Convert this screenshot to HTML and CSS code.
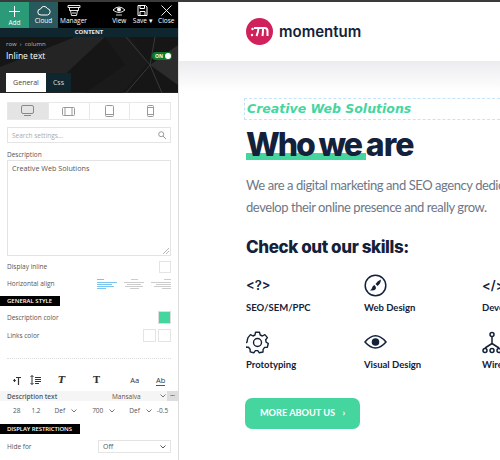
FILE: index.html
```html
<!DOCTYPE html>
<html lang="en">
<head>
    <meta charset="UTF-8">
    <title>Momentum editor</title>
    <link rel="stylesheet" href="styles.css">
</head>
<body>
    <div class="topline"></div>
    <div class="page">
        <aside class="panel">
            <div class="toolbar">
                <div class="tool tool-add">
                    <svg width="13" height="13" viewBox="0 0 13 13"><path d="M6.500 1v11M1 6.500h11" stroke="#fff" fill="none"/></svg>
                    <span>Add</span>
                </div>
                <div class="tool tool-cloud">
                    <svg width="14" height="11" viewBox="0 0 14 11"><path d="M4 10a3 3 0 0 1-.4-6A3.600 3.600 0 0 1 10.300 3.500a3.300 3.300 0 0 1 .2 6.500z" stroke="#fff" fill="none"/></svg>
                    <span>Cloud</span>
                </div>
                <div class="tool tool-manager">
                    <svg width="14" height="11" viewBox="0 0 14 11"><path d="M1 .5h12v2H1zM2.500 2.500v3h9v-3M3.500 5.500l1 5h5l1-5M5 8h4" stroke="#fff" fill="none" stroke-width=".9"/></svg>
                    <span>Manager</span>
                </div>
                <div class="tool-gap"></div>
                <div class="tool">
                    <svg width="14" height="11" viewBox="0 0 14 11"><path d="M1 5Q7-1 13 5Q7 10 1 5z" stroke="#fff" fill="none" stroke-width=".9"/><circle cx="7" cy="4.500" r="2" fill="#fff"/><path d="M4 10h6" stroke="#fff" stroke-width=".8"/></svg>
                    <span>View</span>
                </div>
                <div class="tool">
                    <svg width="11" height="11" viewBox="0 0 11 11"><path d="M1 .5h7.500l1.500 1.500v8.500H1zM3 .5v3h4.500v-3M3 10.500v-4h5v4" stroke="#fff" fill="none"/></svg>
                    <span>Save ▾</span>
                </div>
                <div class="tool">
                    <svg width="11" height="11" viewBox="0 0 11 11"><path d="M.5.5l10 10M10.500.5l-10 10" stroke="#fff" fill="none" stroke-width=".9"/></svg>
                    <span>Close</span>
                </div>
            </div>
            <div class="content-bar">CONTENT</div>
            <div class="panel-head">
                <svg class="head-art" width="178" height="56" viewBox="0 0 178 56">
                    <path d="M0 30L75 0h30L45 56H0z" fill="#242424"/>
                    <path d="M105 0h25l18 26-26 30H85l40-28z" fill="#1a1a1a"/>
                    <path d="M126 0l24 28-24 28M150 28h28M155 0l-5 28 12 28" stroke="#3a3a3a" fill="none"/>
                    <path d="M150 28L178 8v40z" fill="#2c2c2c"/>
                </svg>
                <div class="crumbs">row &nbsp;›&nbsp; column</div>
                <div class="head-row">
                    <span class="head-title">Inline text</span>
                    <span class="toggle">ON<i></i></span>
                </div>
                <div class="tabs">
                    <span class="tab tab-on">General</span>
                    <span class="tab">Css</span>
                </div>
            </div>

            <div class="panel-body">
                <div class="devices">
                    <div class="device device-on">
                        <svg width="13" height="12" viewBox="0 0 13 12"><rect x=".5" y=".5" width="12" height="8" rx="1.500" fill="none" stroke="#888"/><path d="M3 10.500h7" stroke="#888"/></svg>
                    </div>
                    <div class="device">
                        <svg width="13" height="9" viewBox="0 0 13 9"><rect x=".5" y=".5" width="12" height="8" rx="1" fill="none" stroke="#999"/><path d="M3 .5v8M10 .5v8" stroke="#999"/></svg>
                    </div>
                    <div class="device">
                        <svg width="9" height="12" viewBox="0 0 9 12"><rect x=".5" y=".5" width="8" height="11" rx="1" fill="none" stroke="#999"/><path d="M.5 9.500h8" stroke="#999"/></svg>
                    </div>
                    <div class="device">
                        <svg width="7" height="12" viewBox="0 0 7 12"><rect x=".5" y=".5" width="6" height="11" rx="1" fill="none" stroke="#999"/><path d="M.5 2.500h6M.5 9.500h6" stroke="#999"/></svg>
                    </div>
                </div>

                <div class="search">
                    <span>Search settings...</span>
                    <svg width="8" height="8" viewBox="0 0 8 8"><circle cx="3.200" cy="3.200" r="2.500" fill="none" stroke="#999"/><path d="M5 5l3 3" stroke="#999"/></svg>
                </div>

                <div class="label label-desc">Description</div>
                <div class="textarea">
                    Creative Web Solutions
                    <svg class="grip" width="6" height="6" viewBox="0 0 6 6"><path d="M0 6l6-6M3 6l3-3" stroke="#999" stroke-width=".7"/></svg>
                </div>

                <div class="row row-inline">
                    <span class="label">Display inline</span>
                    <span class="check"></span>
                </div>
                <div class="row row-align">
                    <span class="label">Horizontal align</span>
                    <div class="aligns">
                        <svg width="20" height="10" viewBox="0 0 20 10"><path d="M0 .500h7M0 3.500h20M0 5.500h15M0 7.500h17M0 9.500h9" stroke="#7cc4f0"/></svg>
                        <svg width="20" height="10" viewBox="0 0 20 10"><path d="M7 .500h7M0 3.500h20M3 5.500h14M1 7.500h18M6 9.500h9" stroke="#ccc"/></svg>
                        <svg width="20" height="10" viewBox="0 0 20 10"><path d="M13 .500h7M0 3.500h20M5 5.500h15M3 7.500h17M11 9.500h9" stroke="#ccc"/></svg>
                    </div>
                </div>
            </div>

            <div class="section-bar bar-general">GENERAL STYLE</div>

            <div class="panel-body">
                <div class="row row-color">
                    <span class="label">Description color</span>
                    <span class="swatch swatch-green"></span>
                </div>
                <div class="row row-links">
                    <span class="label">Links color</span>
                    <div class="swatches"><span class="swatch"></span><span class="swatch"></span></div>
                </div>
                <div class="dots"></div>
            </div>

            <div class="type-icons">
                <svg class="ti ti-1" width="8" height="9" viewBox="0 0 8 9"><path d="M3 1.500h5M5.500 1.500V9M.2 4.500h2.600M1.500 3v3" stroke="#333" stroke-width="1.200" fill="none"/></svg>
                <svg class="ti ti-2" width="11" height="10" viewBox="0 0 11 10"><path d="M2 .5v9M.5 2L2 .5 3.500 2M.5 8L2 9.500 3.500 8M5 2.500h6M5 4.500h6M5 6.500h6M5 8.500h4" stroke="#333" fill="none"/></svg>
                <span class="ti ti-3">T</span>
                <span class="ti ti-4">T</span>
                <span class="ti ti-5">Aa</span>
                <span class="ti ti-6">Ab</span>
            </div>
            <div class="type-head">
                <b>Description text</b>
                <span class="type-font">Mansalva</span>
                <svg class="chev" width="6" height="4" viewBox="0 0 6 4"><path d="M.5.500L3 3 5.500.500" stroke="#777" fill="none"/></svg>
                <span class="more">•••</span>
            </div>
            <div class="type-vals">
                <span class="v-size">28</span>
                <span class="v-line">1.2</span>
                <span class="v-def1">Def<svg class="chev" width="6" height="4" viewBox="0 0 6 4"><path d="M.5.500L3 3 5.500.500" stroke="#777" fill="none"/></svg></span>
                <span class="v-700">700<svg class="chev" width="6" height="4" viewBox="0 0 6 4"><path d="M.5.500L3 3 5.500.500" stroke="#777" fill="none"/></svg></span>
                <span class="v-def2">Def<svg class="chev" width="6" height="4" viewBox="0 0 6 4"><path d="M.5.500L3 3 5.500.500" stroke="#777" fill="none"/></svg></span>
                <span class="v-ls">-0.5</span>
            </div>

            <div class="section-bar bar-display">DISPLAY RESTRICTIONS</div>
            <div class="panel-body">
                <div class="row row-hide">
                    <span class="label">Hide for</span>
                    <div class="select">Off <svg width="6" height="4" viewBox="0 0 6 4"><path d="M.5.500L3 3 5.500.500" stroke="#555" fill="none"/></svg></div>
                </div>
            </div>
        </aside>

        <main class="site">
            <header class="site-head">
                <svg width="27" height="27" viewBox="0 0 27 27">
                    <circle cx="13.500" cy="13.500" r="13.500" fill="#d0215a"/>
                    <path d="M8 10h10.500a3 3 0 0 1 3 3v5M12.500 10.500q-.5 4-2 7.500M17 11q0 4-.5 7" stroke="#fff" stroke-width="2" fill="none"/>
                    <circle cx="6.500" cy="11" r="1.200" fill="#fff"/>
                    <circle cx="6" cy="17" r="1.200" fill="#fff"/>
                </svg>
                <span class="brand">momentum</span>
            </header>
            <div class="head-shade"></div>

            <section class="about">
                <div class="tagline">Creative Web Solutions</div>
                <h1><span class="mark">Who we </span>are</h1>
                <p class="intro">We are a digital marketing and SEO agency dedicated to helping brands<br>develop their online presence and really grow.</p>
                <h2>Check out our skills:</h2>

                <div class="skills">
                    <div class="skill">
                        <div class="skill-icon code">&lt;?&gt;</div>
                        <div class="skill-name">SEO/SEM/PPC</div>
                    </div>
                    <div class="skill">
                        <div class="skill-icon">
                            <svg width="23" height="23" viewBox="0 0 23 23"><circle cx="11.500" cy="11.500" r="10.300" fill="none" stroke="#14213a" stroke-width="1.500"/><path d="M17 5.500q-3.500 1-5.500 4.500l2 2Q16.500 10 17 5.500zM10.500 11q-2 .5-2.300 2.500-.2 1.500-2.200 3 4.500 .5 5.800-1.500 1-1.700-1.300-4z" fill="#14213a"/></svg>
                        </div>
                        <div class="skill-name">Web Design</div>
                    </div>
                    <div class="skill">
                        <div class="skill-icon code">&lt;/&gt;</div>
                        <div class="skill-name">Development</div>
                    </div>
                    <div class="skill">
                        <div class="skill-icon">
                            <svg width="23" height="23" viewBox="0 0 23 23"><path d="M9.500 1.200h4l.7 2.800 2.200 1 2.500-1.400 2.500 3-1.700 2.200.4 2.400 2.200 1.300-1 3.700-2.700.2-1.500 2-.1 2.600-3.700.8-1.500-2.200h-2.400l-1.600 2.200-3.600-.9-.1-2.600-1.600-2-2.700-.1-1-3.700 2.200-1.300.4-2.400L2 6.600l2.500-3L7 5l2-1z" fill="none" stroke="#14213a" stroke-width="1.400" stroke-linejoin="round"/><circle cx="11.500" cy="11.500" r="4" fill="none" stroke="#14213a" stroke-width="1.400"/></svg>
                        </div>
                        <div class="skill-name">Prototyping</div>
                    </div>
                    <div class="skill">
                        <div class="skill-icon">
                            <svg width="23" height="16" viewBox="0 0 23 16"><path d="M1 8q10.500-12.500 21 0Q11.500 20 1 8z" fill="none" stroke="#14213a" stroke-width="1.500"/><circle cx="11.500" cy="8" r="3.800" fill="#14213a"/></svg>
                        </div>
                        <div class="skill-name">Visual Design</div>
                    </div>
                    <div class="skill">
                        <div class="skill-icon">
                            <svg width="23" height="23" viewBox="0 0 23 23"><g fill="none" stroke="#14213a" stroke-width="1.500"><circle cx="10" cy="3.500" r="2"/><circle cx="3" cy="19.500" r="2"/><circle cx="10" cy="19.500" r="2"/><circle cx="17" cy="19.500" r="2"/><path d="M10 5.500v7M10 12.500l-7 4.500M10 12.500l7 4.500"/></g></svg>
                        </div>
                        <div class="skill-name">Wireframing</div>
                    </div>
                </div>

                <a class="btn" href="#">MORE ABOUT US <span class="btn-arrow">›</span></a>
            </section>
        </main>
    </div>
</body>
</html>
```

FILE: styles.css
```css
body {
    margin: 0;
    height: 460px;
    overflow: hidden;
    background-color: white;
    font-family: 'Open Sans', Arial, sans-serif;
    color: #444;
}
.topline {
    height: 2px;
    background-color: #3a3a3a;
}
.page {
    display: flex;
    height: 458px;
}

/* editor panel */
.panel {
    width: 178px;
    flex: none;
    border-right: 1px solid #ddd;
    background-color: white;
    overflow: hidden;
}
.toolbar {
    display: flex;
    height: 26px;
    background-color: #000;
    color: white;
}
.tool {
    width: 23.500px;
    display: flex;
    flex-direction: column;
    align-items: center;
    gap: 1px;
    padding-top: 3px;
    box-sizing: border-box;
    font-size: 6.500px;
    line-height: 8px;
    white-space: nowrap;
}
.tool svg {
    flex: none;
}
.tool-add {
    width: 29px;
    background-color: #2b9a78;
}
.tool-cloud {
    width: 29px;
    background-color: #28595c;
}
.tool-manager {
    width: 31px;
}
.tool-gap {
    flex: 1;
}
.content-bar {
    height: 9px;
    background-color: #10262e;
    color: #e8e8e8;
    font-size: 6px;
    font-weight: 700;
    line-height: 9px;
    text-align: center;
}
.panel-head {
    position: relative;
    height: 55px;
    background-color: #161616;
    color: white;
    border-bottom: 1px solid #222;
}
.head-art {
    position: absolute;
    top: 0;
    left: 0;
}
.crumbs {
    position: relative;
    padding: 2px 0 0 6px;
    font-size: 6px;
    line-height: 10px;
    color: #bbb;
}
.head-row {
    position: relative;
    display: flex;
    justify-content: space-between;
    align-items: center;
    padding: 0 6px;
}
.head-title {
    font-size: 8.500px;
    line-height: 14px;
}
.toggle {
    display: flex;
    align-items: center;
    justify-content: space-between;
    width: 16px;
    height: 8px;
    padding: 0 1px 0 3px;
    border-radius: 4px;
    background-color: #0c7a2c;
    font-size: 5px;
    font-weight: 700;
}
.toggle i {
    width: 6px;
    height: 6px;
    border-radius: 50%;
    background-color: white;
}
.tabs {
    position: absolute;
    left: 6px;
    bottom: 0;
    display: flex;
}
.tab {
    width: 40px;
    height: 19px;
    font-size: 7px;
    line-height: 20px;
    text-align: center;
    background-color: #10262e;
    color: #ddd;
}
.tab-on {
    background-color: white;
    color: #444;
}
.tab + .tab {
    width: 25px;
}
.panel-body {
    padding: 0 7px;
}
.devices {
    display: flex;
    height: 18px;
    margin-top: 9px;
    border: 1px solid #e8e8e8;
    box-sizing: border-box;
}
.device {
    flex: 1;
    display: flex;
    align-items: center;
    justify-content: center;
    border-left: 1px solid #e8e8e8;
}
.device:first-child {
    border-left: none;
}
.device-on {
    background-color: #e4e4e4;
}
.search {
    display: flex;
    align-items: center;
    justify-content: space-between;
    height: 16px;
    margin-top: 7px;
    padding: 0 4px;
    border: 1px solid #e4e4e4;
    box-sizing: border-box;
    font-size: 6.500px;
    color: #aaa;
}
.label {
    font-size: 6.500px;
    line-height: 10px;
    color: #555;
    white-space: nowrap;
}
.label-desc {
    margin-top: 7px;
}
.textarea {
    position: relative;
    height: 96px;
    padding: 2px 4px;
    border: 1px solid #e4e4e4;
    box-sizing: border-box;
    font-size: 7.200px;
    line-height: 11px;
    color: #555;
}
.grip {
    position: absolute;
    right: 1px;
    bottom: 1px;
}
.row {
    display: flex;
    align-items: center;
    justify-content: space-between;
}
.row-inline {
    margin-top: 5px;
}
.check {
    width: 10px;
    height: 10px;
    border: 1px solid #e4e4e4;
}
.row-align {
    margin-top: 6px;
}
.aligns {
    display: flex;
    gap: 7px;
}
.section-bar {
    height: 10px;
    padding-left: 7px;
    background-color: #000;
    color: white;
    font-size: 6px;
    line-height: 10px;
    font-weight: 600;
    white-space: nowrap;
}
.bar-general {
    width: 53px;
    margin-top: 7px;
}
.row-color {
    margin-top: 5px;
}
.row-links {
    margin-top: 5px;
}
.swatches {
    display: flex;
    gap: 2px;
}
.swatch {
    display: block;
    width: 11px;
    height: 11px;
    border: 1px solid #e4e4e4;
}
.swatch-green {
    background-color: #45d6a0;
    border: 1px solid #ddd;
}
.dots {
    margin-top: 16px;
    border-top: 1px dotted #ddd;
}
.type-icons {
    display: flex;
    align-items: center;
    height: 12px;
    margin-top: 15px;
    font-size: 9.500px;
    line-height: 12px;
    color: #333;
    font-weight: 700;
}
.ti {
    flex: none;
    white-space: nowrap;
}
.ti-1 {
    margin-left: 13px;
}
.ti-2 {
    margin-left: 9px;
}
.ti-3 {
    margin-left: 17px;
    font-style: italic;
    font-family: 'DejaVu Serif', serif;
}
.ti-4 {
    margin-left: 28px;
    font-family: 'DejaVu Serif', serif;
}
.ti-5 {
    margin-left: 30px;
    font-weight: 400;
    font-size: 7.500px;
}
.ti-6 {
    margin-left: 17px;
    font-weight: 400;
    font-size: 7.500px;
    border-bottom: 1px solid #555;
    height: 11px;
}
.type-head {
    display: flex;
    align-items: center;
    height: 10px;
    margin-top: 5px;
    padding-left: 7px;
    background-color: #f5f5f5;
    font-size: 6.500px;
    color: #555;
    white-space: nowrap;
}
.type-head b {
    width: 105px;
    flex: none;
    font-weight: 600;
}
.type-font {
    width: 48px;
    flex: none;
}
.more {
    display: block;
    width: 11px;
    margin-left: auto;
    font-size: 4px;
    line-height: 10px;
    text-align: center;
    background-color: #ddd;
    color: #333;
}
.type-vals {
    display: flex;
    align-items: center;
    height: 18px;
    font-size: 6.500px;
    color: #555;
    white-space: nowrap;
}
.v-size {
    margin-left: 13px;
}
.v-line {
    margin-left: 11px;
}
.v-def1 {
    margin-left: 14px;
}
.v-700 {
    margin-left: 15px;
}
.v-def2 {
    margin-left: 14px;
}
.v-ls {
    margin-left: 5px;
}
.chev {
    margin-left: 6px;
}
.type-head .chev {
    margin-left: 0;
}
.bar-display {
    width: 73px;
    margin-top: 5px;
    letter-spacing: -.1px;
}
.row-hide {
    margin-top: 6px;
}
.select {
    display: flex;
    align-items: center;
    justify-content: space-between;
    width: 73px;
    height: 13px;
    padding: 0 4px;
    border: 1px solid #e4e4e4;
    box-sizing: border-box;
    font-size: 7px;
    color: #555;
}

/* site preview */
.site {
    flex: 1;
    min-width: 0;
    overflow: hidden;
    background-color: white;
}
.site-head {
    display: flex;
    align-items: center;
    gap: 6px;
    height: 59px;
    padding-left: 67px;
    box-sizing: border-box;
}
.brand {
    font-family: 'Inter', Arial, sans-serif;
    font-size: 15px;
    font-weight: 600;
    color: #14213a;
}
.head-shade {
    height: 30px;
    background: linear-gradient(#ececf0, white);
}
.about {
    padding-left: 67px;
}
.tagline {
    height: 22px;
    margin: 7px 0 0 -2px;
    padding-left: 2px;
    border: 1px dashed #c4e4fa;
    border-right: none;
    box-sizing: border-box;
    font-family: 'DejaVu Sans', sans-serif;
    font-style: italic;
    font-size: 12.500px;
    font-weight: 700;
    line-height: 20px;
    color: #45d6a0;
    white-space: nowrap;
}
h1 {
    margin: 6px 0 0;
    font-family: 'Inter', Arial, sans-serif;
    font-size: 32px;
    font-weight: 800;
    line-height: 38px;
    letter-spacing: -.9px;
    color: #14213a;
    white-space: nowrap;
}
.mark {
    letter-spacing: -2.100px;
    background: linear-gradient(#45d6a0, #45d6a0) no-repeat 0 28px / 100% 7px;
}
.intro {
    margin: 10px 0 0;
    font-family: 'Lato', Arial, sans-serif;
    font-size: 13px;
    letter-spacing: -.43px;
    line-height: 22px;
    color: #6e7787;
    white-space: nowrap;
}
h2 {
    margin: 17px 0 0;
    font-family: 'Inter', Arial, sans-serif;
    font-size: 17px;
    font-weight: 800;
    line-height: 24px;
    letter-spacing: -.4px;
    color: #14213a;
    white-space: nowrap;
}
.skills {
    display: grid;
    grid-template-columns: repeat(3, 118px);
    grid-auto-rows: 57px;
    width: 354px;
    margin-top: 14px;
}
.skill-icon {
    display: flex;
    align-items: center;
    height: 24px;
}
.code {
    font-family: 'Inter', Arial, sans-serif;
    font-size: 13px;
    font-weight: 600;
    color: #14213a;
}
.skill-name {
    margin-top: 4px;
    font-family: 'Lato', Arial, sans-serif;
    font-size: 9.500px;
    font-weight: 700;
    line-height: 14px;
    color: #14213a;
    white-space: nowrap;
}
.btn {
    display: block;
    width: 115px;
    height: 31px;
    margin: 11px 0 0 -1px;
    border-radius: 7px;
    background-color: #45d6a0;
    color: white;
    font-family: 'Lato', Arial, sans-serif;
    font-size: 9.200px;
    font-weight: 700;
    line-height: 30px;
    text-align: center;
    text-decoration: none;
    white-space: nowrap;
}
.btn-arrow {
    margin-left: 5px;
}
```
